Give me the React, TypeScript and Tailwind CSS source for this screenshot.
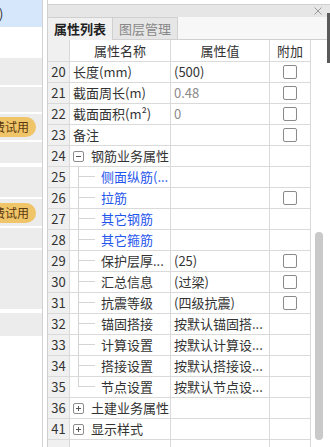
import React from "react";

const FONT = { fontFamily: '"Noto Sans CJK SC", "Microsoft YaHei", "Noto Sans", sans-serif' };

type Row = {
  n: string;
  name: string;
  value?: string;
  valueGray?: boolean;
  check?: boolean;
  kind?: "plain" | "minus" | "plus" | "child";
  blue?: boolean;
  last?: boolean;
};

const rows: Row[] = [
  { n: "20", name: "长度(mm)", value: "(500)", check: true },
  { n: "21", name: "截面周长(m)", value: "0.48", valueGray: true, check: true },
  { n: "22", name: "截面面积(m²)", value: "0", valueGray: true, check: true },
  { n: "23", name: "备注", check: true },
  { n: "24", name: "钢筋业务属性", kind: "minus" },
  { n: "25", name: "侧面纵筋(...", kind: "child", blue: true },
  { n: "26", name: "拉筋", kind: "child", blue: true, check: true },
  { n: "27", name: "其它钢筋", kind: "child", blue: true },
  { n: "28", name: "其它箍筋", kind: "child", blue: true },
  { n: "29", name: "保护层厚...", kind: "child", value: "(25)", check: true },
  { n: "30", name: "汇总信息", kind: "child", value: "(过梁)", check: true },
  { n: "31", name: "抗震等级", kind: "child", value: "(四级抗震)", check: true },
  { n: "32", name: "锚固搭接", kind: "child", value: "按默认锚固搭..." },
  { n: "33", name: "计算设置", kind: "child", value: "按默认计算设..." },
  { n: "34", name: "搭接设置", kind: "child", value: "按默认搭接设..." },
  { n: "35", name: "节点设置", kind: "child", value: "按默认节点设...", last: true },
  { n: "36", name: "土建业务属性", kind: "plus" },
  { n: "41", name: "显示样式", kind: "plus" },
];

function Box({ plus }: { plus?: boolean }) {
  return (
    <div className="w-[11px] h-[11px] border border-[#8c8c8c] rounded-[2px] flex items-center justify-center shrink-0 bg-white">
      <svg width="7" height="7" viewBox="0 0 7 7">
        <line x1="1" y1="3.5" x2="6" y2="3.5" stroke="#555" strokeWidth="1" />
        {plus && <line x1="3.5" y1="1" x2="3.5" y2="6" stroke="#555" strokeWidth="1" />}
      </svg>
    </div>
  );
}

function Check() {
  return <div className="w-[14px] h-[14px] border border-[#8a8a8a] rounded-[2px] bg-white" />;
}

function NameCell({ r }: { r: Row }) {
  if (r.kind === "minus" || r.kind === "plus") {
    return (
      <div className="flex items-center h-full pl-[3px]">
        <Box plus={r.kind === "plus"} />
        <span className="ml-[7px] text-[#333]">{r.name}</span>
      </div>
    );
  }
  if (r.kind === "child") {
    return (
      <div className="flex h-full">
        <div className="ml-[8px] w-[17px] h-full flex flex-col shrink-0">
          <div className="h-1/2 border-l border-b border-[#d4d4d4]" />
          <div className={"h-1/2 " + (r.last ? "" : "border-l border-[#d4d4d4]")} />
        </div>
        <span className={"ml-[6px] self-center whitespace-nowrap " + (r.blue ? "text-[#1f56ec]" : "text-[#333]")}>
          {r.name}
        </span>
      </div>
    );
  }
  return <div className="flex items-center h-full pl-[3px] text-[#333]">{r.name}</div>;
}

function Badge() {
  return (
    <div className="-ml-[10px] h-[20px] w-[46px] rounded-full bg-[#f0c468] flex items-center justify-end pr-[7px] text-[12px] text-[#5a3a10] whitespace-nowrap">
      费试用
    </div>
  );
}

function LeftStrip() {
  return (
    <div className="w-[42px] h-full flex flex-col shrink-0 overflow-hidden text-[13px]">
      <div className="h-[27px] bg-[#d6e7fb] flex items-center text-[#333]">
        <span className="-ml-[1px]">)</span>
      </div>
      <div className="h-[31px] bg-white" />
      <div className="h-[27px] bg-[#ececec]" />
      <div className="h-[2px] bg-white" />
      <div className="h-[25px] bg-[#ececec]" />
      <div className="h-[2px] bg-white" />
      <div className="h-[26px] bg-[#ececec] flex items-center">
        <Badge />
      </div>
      <div className="h-[2px] bg-white" />
      <div className="h-[21px] bg-[#ececec]" />
      <div className="h-[4px] bg-white" />
      <div className="h-[30px] bg-[#ececec]" />
      <div className="h-[2px] bg-white" />
      <div className="h-[27px] bg-[#ececec] flex items-center">
        <Badge />
      </div>
      <div className="h-[2px] bg-white" />
      <div className="h-[20px] bg-[#ececec]" />
      <div className="h-[2px] bg-white" />
      <div className="h-[59px] bg-[#ececec]" />
      <div className="h-[4px] bg-white" />
      <div className="h-[23px] bg-[#ececec]" />
      <div className="flex-1 bg-white" />
    </div>
  );
}

export default function App() {
  return (
    <div className="w-[330px] h-[447px] flex overflow-hidden bg-white relative text-[13px]" style={FONT}>
      <LeftStrip />
      <div className="w-[1px] h-full bg-[#d2d2d2] shrink-0" />
      <div className="w-[4px] h-full bg-white shrink-0" />
      <div className="flex-1 h-full border-l border-[#cfcfcf] flex flex-col min-w-0">
        <div className="h-[5px] bg-white border-b border-[#d0d0d0] shrink-0" />
        <div className="h-[12px] bg-[#e6e6e6] flex items-center justify-end pr-[8px] shrink-0">
          <svg width="8" height="8" viewBox="0 0 8 8">
            <line x1="0.5" y1="0.5" x2="7.5" y2="7.5" stroke="#9a9a9a" strokeWidth="1" />
            <line x1="7.5" y1="0.5" x2="0.5" y2="7.5" stroke="#9a9a9a" strokeWidth="1" />
          </svg>
        </div>
        <div className="h-[23px] flex bg-[#f7f7f7] shrink-0">
          <div className="w-[65px] h-full bg-[#f0f0f0] border-r border-t border-[#d0d0d0] flex items-center justify-center font-bold text-[#222]">
            属性列表
          </div>
          <div className="w-[65px] h-full bg-[#e6e6e6] border-r border-t border-b border-[#d0d0d0] flex items-center justify-center text-[#888]">
            图层管理
          </div>
          <div className="flex-1 border-b border-[#d0d0d0]" />
        </div>
        <div className="flex-1 flex min-h-0">
          <div className="w-[263px] h-full flex flex-col shrink-0">
            <div className="h-[22px] flex shrink-0">
              <div className="w-[22px] h-full bg-[#f0f0f0] border-r border-b border-[#dadada]" />
              <div className="w-[101px] h-full border-r border-b border-[#dadada] flex items-center justify-center text-[#333]">属性名称</div>
              <div className="w-[99px] h-full border-r border-b border-[#dadada] flex items-center justify-center text-[#333]">属性值</div>
              <div className="w-[41px] h-full border-r border-b border-[#dadada] flex items-center justify-center text-[#333]">附加</div>
            </div>
            {rows.map((r) => (
              <div key={r.n} className="h-[21px] flex shrink-0">
                <div className="w-[22px] h-full bg-[#f0f0f0] border-r border-b border-[#dadada] flex items-center justify-center text-[#333]">
                  {r.n}
                </div>
                <div className="w-[101px] h-full border-r border-b border-[#dadada] overflow-hidden whitespace-nowrap">
                  <NameCell r={r} />
                </div>
                <div
                  className={
                    "w-[99px] h-full border-r border-b border-[#dadada] flex items-center pl-[3px] whitespace-nowrap overflow-hidden " +
                    (r.valueGray ? "text-[#8a8a8a]" : "text-[#333]")
                  }
                >
                  {r.value}
                </div>
                <div className="w-[41px] h-full border-r border-b border-[#dadada] flex items-center justify-center">
                  {r.check && <Check />}
                </div>
              </div>
            ))}
            <div className="flex-1 flex">
              <div className="w-[22px] h-full bg-[#f0f0f0] border-r border-[#dadada]" />
              <div className="w-[101px] h-full border-r border-[#dadada]" />
              <div className="w-[99px] h-full border-r border-[#dadada]" />
              <div className="w-[41px] h-full border-r border-[#dadada]" />
            </div>
          </div>
          <div className="flex-1 h-full flex flex-col items-start pl-[4px] pt-[192px] pb-[7px]">
            <div className="w-[8px] flex-1 rounded-full bg-[#c9c9c9]" />
          </div>
        </div>
      </div>
      <div className="absolute right-0 top-[13px] w-[3px] h-[50px] bg-[#5a5a5a]" />
    </div>
  );
}
